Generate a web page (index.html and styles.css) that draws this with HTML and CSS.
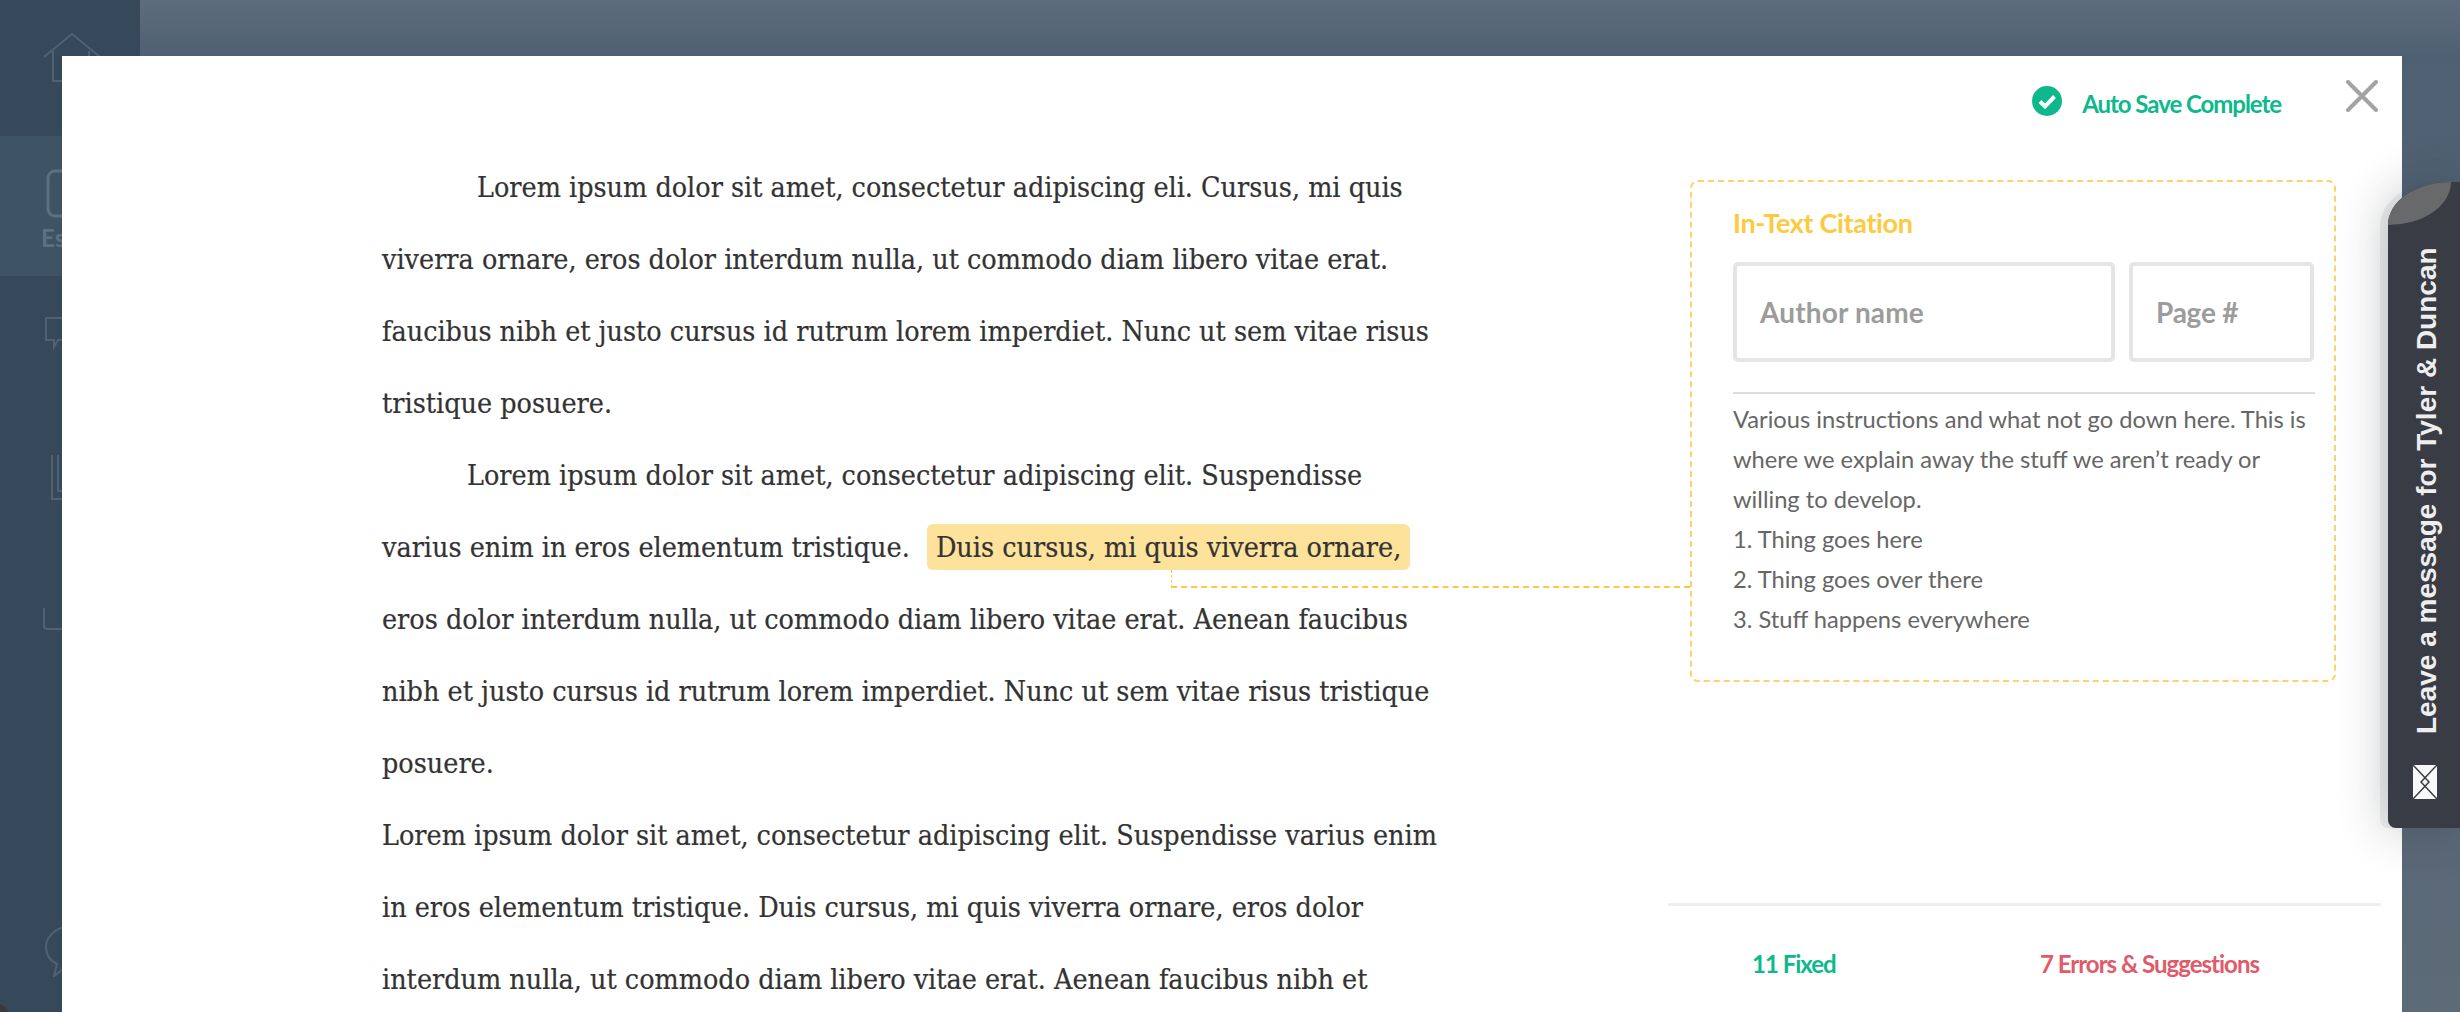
FILE: index.html
```html
<!DOCTYPE html>
<html lang="en">
<head>
<meta charset="utf-8">
<title>Essay editor</title>
<link rel="stylesheet" href="styles.css">
</head>
<body>
<div class="app">
  <nav class="sidebar">
    <div class="nav-item nav-home">
      <svg class="nav-icon" width="60" height="50" viewBox="0 0 60 50"><path d="M2 24 30 1l28 23M11 18v30h36V18"/></svg>
    </div>
    <div class="nav-item nav-active">
      <svg class="nav-icon" width="60" height="50" viewBox="0 0 60 50"><rect x="2" y="2" width="40" height="45" rx="7"/></svg>
      <span class="nav-label">Essay</span>
    </div>
    <div class="nav-item nav-chat">
      <svg class="nav-icon" width="60" height="40" viewBox="0 0 60 40"><path d="M4 2h40v22H16l-4 7v-7H4z"/></svg>
    </div>
    <div class="nav-item nav-book">
      <svg class="nav-icon" width="40" height="48" viewBox="0 0 40 48"><path d="M2 2v44h30V2M8 2v36h20"/></svg>
    </div>
    <div class="nav-item nav-tray">
      <svg class="nav-icon" width="40" height="26" viewBox="0 0 40 26"><path d="M2 2v18q0 3 3 3h30"/></svg>
    </div>
    <div class="nav-item nav-help">
      <svg class="nav-icon" width="40" height="54" viewBox="0 0 40 54"><path d="M34 2C14 2 2 12 2 24c0 8 5 14 11 17l-3 12 12-9h12"/></svg>
    </div>
    <span class="nav-corner"></span>
  </nav>
  <div class="backdrop"></div>
</div>

<section class="modal">
  <article class="essay">
    <p class="para">
      <span class="line indent-a">Lorem ipsum dolor sit amet, consectetur adipiscing eli. Cursus, mi quis</span>
      <span class="line">viverra ornare, eros dolor interdum nulla, ut commodo diam libero vitae erat.</span>
      <span class="line">faucibus nibh et justo cursus id rutrum lorem imperdiet. Nunc ut sem vitae risus</span>
      <span class="line">tristique posuere.</span>
    </p>
    <p class="para">
      <span class="line indent-b">Lorem ipsum dolor sit amet, consectetur adipiscing elit. Suspendisse</span>
      <span class="line">varius enim in eros elementum tristique. <mark class="mark">Duis cursus, mi quis viverra ornare,</mark></span>
      <span class="line">eros dolor interdum nulla, ut commodo diam libero vitae erat. Aenean faucibus</span>
      <span class="line">nibh et justo cursus id rutrum lorem imperdiet. Nunc ut sem vitae risus tristique</span>
      <span class="line">posuere.</span>
    </p>
    <p class="para">
      <span class="line">Lorem ipsum dolor sit amet, consectetur adipiscing elit. Suspendisse varius enim</span>
      <span class="line">in eros elementum tristique. Duis cursus, mi quis viverra ornare, eros dolor</span>
      <span class="line">interdum nulla, ut commodo diam libero vitae erat. Aenean faucibus nibh et</span>
    </p>
  </article>

  <aside class="panel">
    <header class="panel-top">
      <svg class="check" width="30" height="30" viewBox="0 0 30 30"><circle cx="15" cy="15" r="15" fill="#0cb88c"/><path d="M8 15.5l5 5 9.5-10" fill="none" stroke="#fff" stroke-width="4"/></svg>
      <span class="saved">Auto Save Complete</span>
      <svg class="close" width="32" height="32" viewBox="0 0 32 32"><path d="M2 2l28 28M30 2 2 30" stroke="#a3a3a3" stroke-width="4" stroke-linecap="round"/></svg>
    </header>

    <div class="citation">
      <h2 class="citation-title">In-Text Citation</h2>
      <div class="fields">
        <div class="field field-author">Author name</div>
        <div class="field field-page">Page #</div>
      </div>
      <ul class="notes">
        <li>Various instructions and what not go down here. This is</li>
        <li>where we explain away the stuff we aren’t ready or</li>
        <li>willing to develop.</li>
        <li>1. Thing goes here</li>
        <li>2. Thing goes over there</li>
        <li>3. Stuff happens everywhere</li>
      </ul>
    </div>

    <footer class="stats">
      <span class="stat-fixed">11 Fixed</span>
      <span class="stat-errors">7 Errors &amp; Suggestions</span>
    </footer>
  </aside>

  <div class="connector"></div>
</section>

<div class="feedback">
  <span class="feedback-leaf"></span>
  <span class="feedback-text">Leave a message for Tyler &amp; Duncan</span>
  <svg class="feedback-mail" width="24" height="34" viewBox="0 0 24 34"><rect width="24" height="34" fill="#f8f8f8"/><path d="M0 0 16 17 0 34M24 0 8 17 24 34" fill="none" stroke="#393c44" stroke-width="1.5"/></svg>
</div>
</body>
</html>
```
FILE: styles.css
```css
* { box-sizing: border-box; }
html, body { margin: 0; height: 100%; }
body { overflow: hidden; font-family: "Lato", "Liberation Sans", sans-serif; background: #5b6a7a; }

.app { display: flex; height: 1012px; }
.sidebar { position: relative; width: 140px; flex: none; overflow: hidden; background: #36495a; display: flex; flex-direction: column; }
.backdrop { flex: 1; background: linear-gradient(180deg, #5e6c7c 0, #566677 30px, #4f6072 56px, #536374 300px, #5d6a78 1000px); }

.nav-item { position: relative; flex: none; padding-left: 42px; }
.nav-icon { display: block; fill: none; stroke: #4f6274; stroke-width: 2; }
.nav-home { height: 136px; padding-top: 33px; }
.nav-active { height: 140px; padding: 33px 0 0 46px; background: #3e5364; }
.nav-active .nav-icon { stroke: #5d7081; stroke-width: 3; }
.nav-label { display: block; margin: 5px 0 0 -5px; font-size: 24px; line-height: 28px; font-weight: 700; color: #5d7081; }
.nav-chat { height: 148px; padding-top: 40px; }
.nav-book { height: 104px; padding: 29px 0 0 50px; }
.nav-tray { height: 340px; padding-top: 78px; }
.nav-help { padding: 55px 0 0 44px; }
.nav-corner { position: absolute; left: -12px; bottom: -12px; width: 20px; height: 20px; border-radius: 50%; background: #3a3a3e; }

.modal { position: absolute; left: 62px; top: 56px; right: 58px; bottom: 0; background: #fff; display: flex; overflow: hidden; }

.essay { width: 1606px; flex: none; padding: 96px 0 0 320px; color: #333; font-family: "DejaVu Serif Condensed", "DejaVu Serif", serif; font-stretch: condensed; font-size: 28.4px; line-height: 72px; -webkit-text-stroke: .2px #333; }
.para { margin: 0; }
.line { display: block; white-space: nowrap; }
.indent-a { padding-left: 95px; }
.indent-b { padding-left: 85px; }
.mark { display: inline-block; height: 46px; margin-left: 9px; padding: 0 9px; line-height: 48px; border-radius: 6px; background: #fde29b; color: inherit; }

.panel { flex: 1; min-width: 0; display: flex; flex-direction: column; padding-right: 21px; }
.panel-top { height: 124px; display: flex; align-items: flex-start; justify-content: flex-end; padding: 30px 3px 0 0; }
.check { margin: 0 20px 0 0; }
.saved { font-size: 24px; line-height: 36px; font-weight: 700; letter-spacing: -1.05px; color: #0cb88c; }
.close { margin: -6px 0 0 65px; }

.citation { width: 646px; height: 502px; margin-left: 22px; padding: 26px 19px 0 41px; border: 2px dashed #fdd26c; border-radius: 8px; }
.citation-title { margin: 0; font-size: 27px; line-height: 30px; font-weight: 700; letter-spacing: -.35px; color: #fdc93e; }
.fields { display: flex; gap: 14px; margin-top: 24px; }
.field { height: 100px; border: 4px solid #e4e5e7; border-radius: 5px; padding-left: 23px; line-height: 92px; font-size: 28px; font-weight: 700; letter-spacing: -.25px; color: #9c9c9c; }
.field-author { width: 382px; letter-spacing: .15px; }
.field-page { width: 185px; }
.notes { list-style: none; margin: 30px 0 0; padding: 5px 0 0; border-top: 2px solid #dcdcdc; color: #666; font-size: 23.7px; line-height: 40px; }

.stats { margin-top: auto; height: 109px; border-top: 3px solid #eee; display: flex; align-items: center; padding: 8px 0 0 84px; font-size: 24px; font-weight: 700; letter-spacing: -1px; }
.stat-fixed { width: 288px; color: #0cb88c; }
.stat-errors { color: #e05a6a; }

.connector { position: absolute; left: 1109px; top: 514px; width: 519px; height: 18px; border-left: 1px dashed #fdc93e; border-bottom: 2px dashed #fdc93e; }

.feedback { position: absolute; left: 2388px; top: 182px; width: 72px; height: 646px; background: #393c44; border-radius: 63px 0 0 8px / 43px 0 0 8px; box-shadow: -8px 0 0 rgba(60,70,80,.08), 0 0 50px rgba(40,45,55,.3); }
.feedback-leaf { position: absolute; left: 0; top: 0; width: 63px; height: 43px; background: #67696b; border-radius: 100% 0 100% 0; }
.feedback-text { position: absolute; left: 39px; top: 552px; transform-origin: 0 0; transform: rotate(-90deg) translateY(-50%); font-family: "Liberation Sans", Arial, sans-serif; font-size: 28px; line-height: 32px; font-weight: 700; color: #eee; white-space: nowrap; }
.feedback-mail { position: absolute; left: 25px; top: 583px; }
```
